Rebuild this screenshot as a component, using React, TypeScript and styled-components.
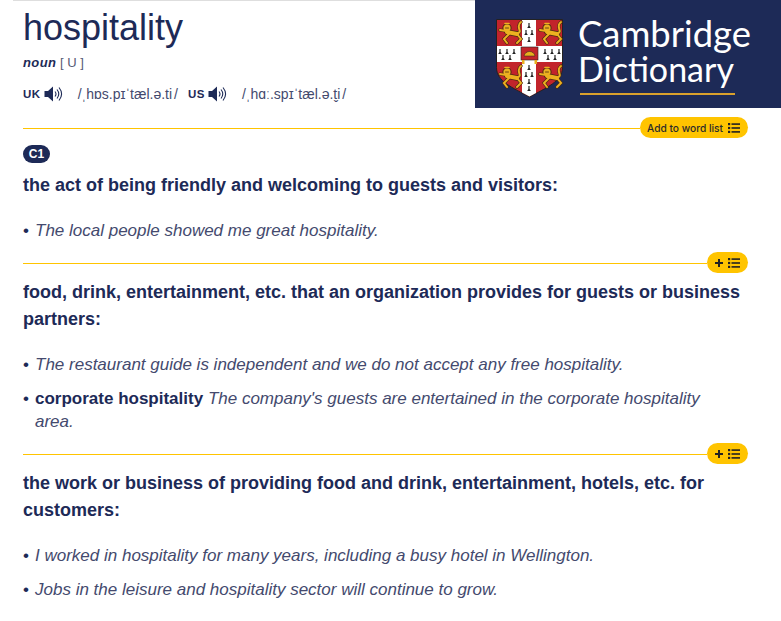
import React from "react";
import styled, { createGlobalStyle } from "styled-components";

const NAVY = "#1d2a57";
const AMBER = "#ffc400";

const GlobalStyle = createGlobalStyle`
  html, body { margin: 0; padding: 0; background: #fff; }
  body { font-family: "Liberation Sans", Arial, sans-serif; color: ${NAVY}; }
`;

const Page = styled.div`
  width: 781px;
  height: 621px;
  overflow: hidden;
`;

const Header = styled.header`
  display: flex;
  height: 108px;
`;

const HeadWord = styled.div`
  flex: 1;
  margin-left: 13px;
  padding: 9px 0 0 10px;
  border-top: 1px solid #dedede;
`;

const Title = styled.h1`
  margin: 0;
  font-size: 36px;
  line-height: 36px;
  font-weight: 400;
`;

const PosLine = styled.div`
  margin-top: 9px;
  font-size: 13px;
  line-height: 16px;
  color: #555a75;
  b { font-style: italic; color: ${NAVY}; letter-spacing: 0.4px; }
`;

const PronLine = styled.div`
  display: flex;
  align-items: center;
  margin-top: 13px;
  height: 20px;
`;

const Region = styled.span`
  font-size: 11.5px;
  font-weight: 700;
  letter-spacing: 0.5px;
  margin-right: 3px;
`;

const Ipa = styled.span<{ $gap: number }>`
  font-size: 14px;
  color: #444a6e;
  margin-left: 15px;
  margin-right: ${(p) => p.$gap}px;
  white-space: nowrap;
`;

const CloseSlash = styled.span`
  margin-left: 2px;
`;

const Logo = styled.div`
  width: 306px;
  background: ${NAVY};
  display: flex;
  align-items: flex-start;
  padding: 19px 0 0 21px;
  box-sizing: border-box;
`;

const LogoWords = styled.div`
  margin: -3px 0 0 15px;
  color: #fff;
  font-family: Lato, "Open Sans", sans-serif;
  font-weight: 400;
`;

const LogoLine = styled.div<{ $size: number }>`
  font-size: ${(p) => p.$size}px;
  line-height: 35px;
  white-space: nowrap;
`;

const LogoRule = styled.div`
  width: 155px;
  height: 2px;
  margin: 7px 0 0 2px;
  background: #d9a02c;
`;

const Body = styled.main`
  padding: 9px 33px 0 23px;
`;

const Divider = styled.div`
  display: flex;
  align-items: flex-start;
  height: 21px;
`;

const Line = styled.div`
  flex: 1;
  height: 1px;
  margin-top: 11px;
  background: ${AMBER};
`;

const Pill = styled.div<{ $label?: boolean }>`
  display: flex;
  align-items: center;
  gap: 5px;
  height: 21px;
  padding: 0 8px 0 ${(p) => (p.$label ? 7 : 8)}px;
  border-radius: 11px;
  background: ${AMBER};
  color: #2b2b2b;
  font-size: 10.2px;
  font-family: Inter, "Liberation Sans", sans-serif;
  font-weight: 500;
`;

const Badge = styled.span`
  display: block;
  width: 27px;
  height: 18px;
  margin: 7px 0 9px;
  border-radius: 9px;
  background: ${NAVY};
  color: #fff;
  font-size: 12px;
  font-weight: 700;
  line-height: 18px;
  text-align: center;
`;

const Definition = styled.p`
  margin: 6px 0 20px;
  font-size: 18px;
  line-height: 27px;
  font-weight: 700;
`;

const Examples = styled.ul`
  list-style: none;
  margin: 0;
  padding: 0 20px 0 0;
`;

const Example = styled.li`
  position: relative;
  padding-left: 12px;
  margin-bottom: 11px;
  font-size: 17px;
  line-height: 23px;
  color: #444a6e;
  &:last-child { margin-bottom: 10px; }
  &::before {
    content: "•";
    position: absolute;
    left: 0;
    font-style: normal;
    color: ${NAVY};
  }
  em { font-style: italic; }
  b { color: ${NAVY}; }
`;

const Speaker = () => (
  <svg width="19" height="18" viewBox="0 0 19 18" fill="none">
    <path d="M0.500 6h3.500l5-4.500v15l-5-4.500h-3.500z" fill={NAVY} />
    <path d="M11 6.500c1.200 1.500 1.200 3.500 0 5M13 4.500c2.200 2.800 2.200 6.200 0 9M15 2.500c3.200 4 3.200 9 0 13" stroke={NAVY} strokeWidth="1.100" />
  </svg>
);

const ListIcon = () => (
  <svg width="12" height="10" viewBox="0 0 12 10" fill="#222">
    <rect x="0" y="0" width="2.200" height="2.200" />
    <rect x="0" y="3.900" width="2.200" height="2.200" />
    <rect x="0" y="7.800" width="2.200" height="2.200" />
    <rect x="3.500" y="0.300" width="8.500" height="1.600" />
    <rect x="3.500" y="4.200" width="8.500" height="1.600" />
    <rect x="3.500" y="8.100" width="8.500" height="1.600" />
  </svg>
);

const PlusIcon = () => (
  <svg width="8" height="8" viewBox="0 0 8 8" fill="#222">
    <rect x="0" y="3" width="8" height="2" />
    <rect x="3" y="0" width="2" height="8" />
  </svg>
);

// passant lion: drawn twice, dark under gold, so it reads as outlined at this small size
const LION_LIMBS = "M20 15L24 20L20 24M12 15L7 20L10 24M9 12L3 11M21 14C26 13 18 7 24 3";

const Lion = ({ x, y }: { x: number; y: number }) => (
  <g transform={`translate(${x} ${y})`} fill="none" strokeLinecap="round">
    <path d={LION_LIMBS} stroke="#4a2c10" strokeWidth="3.200" />
    <path d="M10 13L20 15" stroke="#4a2c10" strokeWidth="5.400" />
    <circle cx="10" cy="9" r="4.600" fill="#4a2c10" />
    <path d={LION_LIMBS} stroke="#ecb020" strokeWidth="2" />
    <path d="M10 13L20 15" stroke="#ecb020" strokeWidth="4" />
    <circle cx="10" cy="9" r="3.600" fill="#ecb020" />
    <path d="M8 4.500h4" stroke="#ecb020" strokeWidth="1.600" />
    <path d="M8.500 9h3" stroke="#4a2c10" strokeWidth="0.800" />
  </g>
);

const Ermine = ({ x, y }: { x: number; y: number }) => (
  <path transform={`translate(${x} ${y})`} d="M-0.600 0h1.200v3l1.200 2h-3.600l1.200-2z" fill="#222" />
);

const ERMINE_SPOTS = [
  [33, 4], [30, 11], [36, 11], [33, 18],
  [4, 30], [11, 30], [18, 30], [7, 36], [14, 36],
  [49, 30], [56, 30], [63, 30], [52, 36], [59, 36],
  [33, 46], [30, 53], [36, 53], [33, 60], [33, 67],
];

const Shield = () => (
  <svg width="67" height="79" viewBox="0 0 67 79">
    <path d="M0.500 0.500h66v48c0 14-16 20-33 29.500-17-9.500-33-15.500-33-29.500z" fill="#c2242b" stroke="#222" strokeWidth="1" />
    <path d="M26 1h14v73l-6.500 3.500-7.500-4z" fill="#fff" />
    <path d="M1 27h65v16h-65z" fill="#fff" />
    <Lion x={1} y={0} />
    <Lion x={41} y={0} />
    <Lion x={1} y={44} />
    <Lion x={41} y={44} />
    {ERMINE_SPOTS.map(([x, y]) => (
      <Ermine key={`${x}-${y}`} x={x} y={y} />
    ))}
    <rect x="25" y="28" width="17" height="13" fill="#c2242b" stroke="#222" strokeWidth="0.600" />
    <path d="M28 37c1-6 10-6 11 0z" fill="#e8ae1e" stroke="#222" strokeWidth="0.500" />
    <rect x="26" y="41" width="2.500" height="4" fill="#e8ae1e" />
    <rect x="38.500" y="41" width="2.500" height="4" fill="#e8ae1e" />
  </svg>
);

const Add = ({ label }: { label?: string }) => (
  <Divider>
    <Line />
    <Pill $label={!!label}>
      {label ? <span>{label}</span> : <PlusIcon />}
      <ListIcon />
    </Pill>
  </Divider>
);

export default function App() {
  return (
    <Page>
      <GlobalStyle />
      <Header>
        <HeadWord>
          <Title>hospitality</Title>
          <PosLine>
            <b>noun</b> [ U ]
          </PosLine>
          <PronLine>
            <Region>UK</Region>
            <Speaker />
            <Ipa $gap={10}>/ˌhɒs.pɪˈtæl.ə.ti<CloseSlash>/</CloseSlash></Ipa>
            <Region>US</Region>
            <Speaker />
            <Ipa $gap={0}>/ˌhɑː.spɪˈtæl.ə.t̬i<CloseSlash>/</CloseSlash></Ipa>
          </PronLine>
        </HeadWord>
        <Logo>
          <Shield />
          <LogoWords>
            <LogoLine $size={36.4}>Cambridge</LogoLine>
            <LogoLine $size={34}>Dictionary</LogoLine>
            <LogoRule />
          </LogoWords>
        </Logo>
      </Header>
      <Body>
        <section>
          <Add label="Add to word list" />
          <Badge>C1</Badge>
          <Definition>the act of being friendly and welcoming to guests and visitors:</Definition>
          <Examples>
            <Example><em>The local people showed me great hospitality.</em></Example>
          </Examples>
        </section>
        <section>
          <Add />
          <Definition>food, drink, entertainment, etc. that an organization provides for guests or business partners:</Definition>
          <Examples>
            <Example><em>The restaurant guide is independent and we do not accept any free hospitality.</em></Example>
            <Example><b>corporate hospitality</b> <em>The company's guests are entertained in the corporate hospitality area.</em></Example>
          </Examples>
        </section>
        <section>
          <Add />
          <Definition>the work or business of providing food and drink, entertainment, hotels, etc. for customers:</Definition>
          <Examples>
            <Example><em>I worked in hospitality for many years, including a busy hotel in Wellington.</em></Example>
            <Example><em>Jobs in the leisure and hospitality sector will continue to grow.</em></Example>
          </Examples>
        </section>
      </Body>
    </Page>
  );
}
